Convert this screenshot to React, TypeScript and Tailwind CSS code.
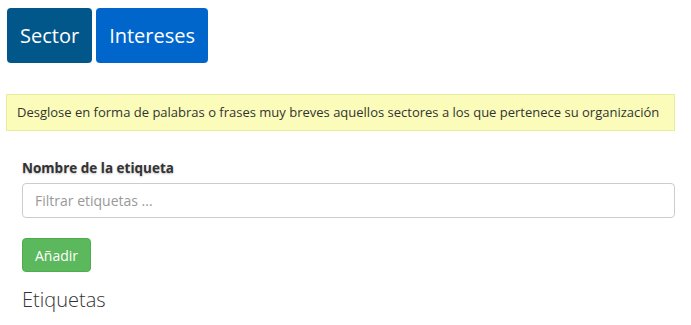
import React from "react";

export default function App() {
  return (
    <div
      className="w-[691px] h-[325px] bg-white text-[#333] overflow-hidden"
      style={{ fontFamily: '"Open Sans", sans-serif' }}
    >
      {/* Tabs */}
      <div className="flex gap-1 pl-[7px] pt-2">
        <button className="h-[55px] px-[13px] rounded-[4px] bg-[#02578a] text-white text-[20px]">
          Sector
        </button>
        <button className="h-[55px] px-[13px] rounded-[4px] bg-[#0066cc] text-white text-[20px]">
          Intereses
        </button>
      </div>

      {/* Notice */}
      <div className="ml-[6px] mr-[16px] mt-[31px] h-[37px] flex items-center px-[10px] bg-[#fbfcb9] border border-[#e9ec9c] text-[13px]">
        Desglose en forma de palabras o frases muy breves aquellos sectores a los que pertenece su organización
      </div>

      {/* Form */}
      <div className="pl-[22px] pr-[16px] pt-[27px]">
        <label className="block text-[13.5px] font-bold text-[#333] [text-shadow:0_1px_2px_rgba(0,0,0,0.25)]">
          Nombre de la etiqueta
        </label>
        <input
          type="text"
          placeholder="Filtrar etiquetas ..."
          className="mt-[5px] w-full h-[35px] px-3 rounded-[4px] border border-[#ccc] text-[14px] placeholder:text-[#999] outline-none"
        />
        <button className="mt-[20px] h-[34px] px-3 rounded-[4px] bg-[#5cb85c] border border-[#4cae4c] text-white text-[14px]">
          Añadir
        </button>
        <h3 className="mt-[13px] text-[20px] font-light">Etiquetas</h3>
      </div>
    </div>
  );
}
